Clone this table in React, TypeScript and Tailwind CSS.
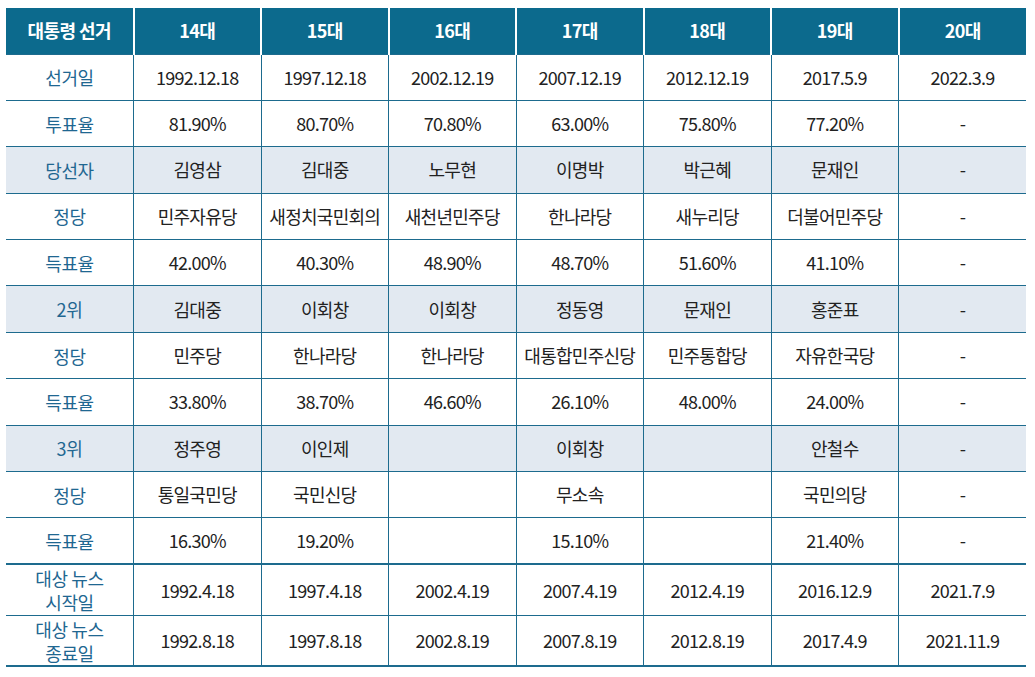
const headers = ["대통령 선거", "14대", "15대", "16대", "17대", "18대", "19대", "20대"];

type Row = { label: string[]; cells: string[]; shaded?: boolean; tall?: boolean };

const rows: Row[] = [
  { label: ["선거일"], cells: ["1992.12.18", "1997.12.18", "2002.12.19", "2007.12.19", "2012.12.19", "2017.5.9", "2022.3.9"] },
  { label: ["투표율"], cells: ["81.90%", "80.70%", "70.80%", "63.00%", "75.80%", "77.20%", "-"] },
  { label: ["당선자"], cells: ["김영삼", "김대중", "노무현", "이명박", "박근혜", "문재인", "-"], shaded: true },
  { label: ["정당"], cells: ["민주자유당", "새정치국민회의", "새천년민주당", "한나라당", "새누리당", "더불어민주당", "-"] },
  { label: ["득표율"], cells: ["42.00%", "40.30%", "48.90%", "48.70%", "51.60%", "41.10%", "-"] },
  { label: ["2위"], cells: ["김대중", "이회창", "이회창", "정동영", "문재인", "홍준표", "-"], shaded: true },
  { label: ["정당"], cells: ["민주당", "한나라당", "한나라당", "대통합민주신당", "민주통합당", "자유한국당", "-"] },
  { label: ["득표율"], cells: ["33.80%", "38.70%", "46.60%", "26.10%", "48.00%", "24.00%", "-"] },
  { label: ["3위"], cells: ["정주영", "이인제", "", "이회창", "", "안철수", "-"], shaded: true },
  { label: ["정당"], cells: ["통일국민당", "국민신당", "", "무소속", "", "국민의당", "-"] },
  { label: ["득표율"], cells: ["16.30%", "19.20%", "", "15.10%", "", "21.40%", "-"] },
  { label: ["대상 뉴스", "시작일"], cells: ["1992.4.18", "1997.4.18", "2002.4.19", "2007.4.19", "2012.4.19", "2016.12.9", "2021.7.9"], tall: true },
  { label: ["대상 뉴스", "종료일"], cells: ["1992.8.18", "1997.8.18", "2002.8.19", "2007.8.19", "2012.8.19", "2017.4.9", "2021.11.9"], tall: true },
];

export default function App() {
  return (
    <div className="w-[1035px] h-[677px] bg-white pl-[6px] pt-[8px] font-['Noto_Sans_CJK_KR','Noto_Sans',sans-serif]">
      <table className="w-[1020px] table-fixed border-collapse">
        <thead>
          <tr className="h-[46px] bg-[#0c6a8d]">
            {headers.map((h, i) => (
              <th
                key={h}
                className={`text-white text-[18px] font-bold tracking-[-0.03em] text-center align-middle ${
                  i > 0 ? "border-l-2 border-white" : ""
                }`}
              >
                {h}
              </th>
            ))}
          </tr>
        </thead>
        <tbody>
          {rows.map((r, ri) => (
            <tr
              key={ri}
              className={`${r.tall ? "h-[51px]" : "h-[46.4px]"} ${r.shaded ? "bg-[#e2e9f1]" : "bg-white"} ${
                ri === 11 ? "border-t-2" : "border-t"
              } border-[#1d6b8e] ${ri === rows.length - 1 ? "border-b-2" : ""}`}
            >
              <td className="text-center align-middle text-[#1f6791] text-[18px] leading-[24px] tracking-[-0.02em]">
                {r.label.map((l) => (
                  <div key={l}>{l}</div>
                ))}
              </td>
              {r.cells.map((c, ci) => (
                <td
                  key={ci}
                  className="border-l border-[#1d6b8e] text-center align-middle text-[#222222] text-[18px] tracking-[-0.04em] whitespace-nowrap"
                >
                  {c}
                </td>
              ))}
            </tr>
          ))}
        </tbody>
      </table>
    </div>
  );
}
